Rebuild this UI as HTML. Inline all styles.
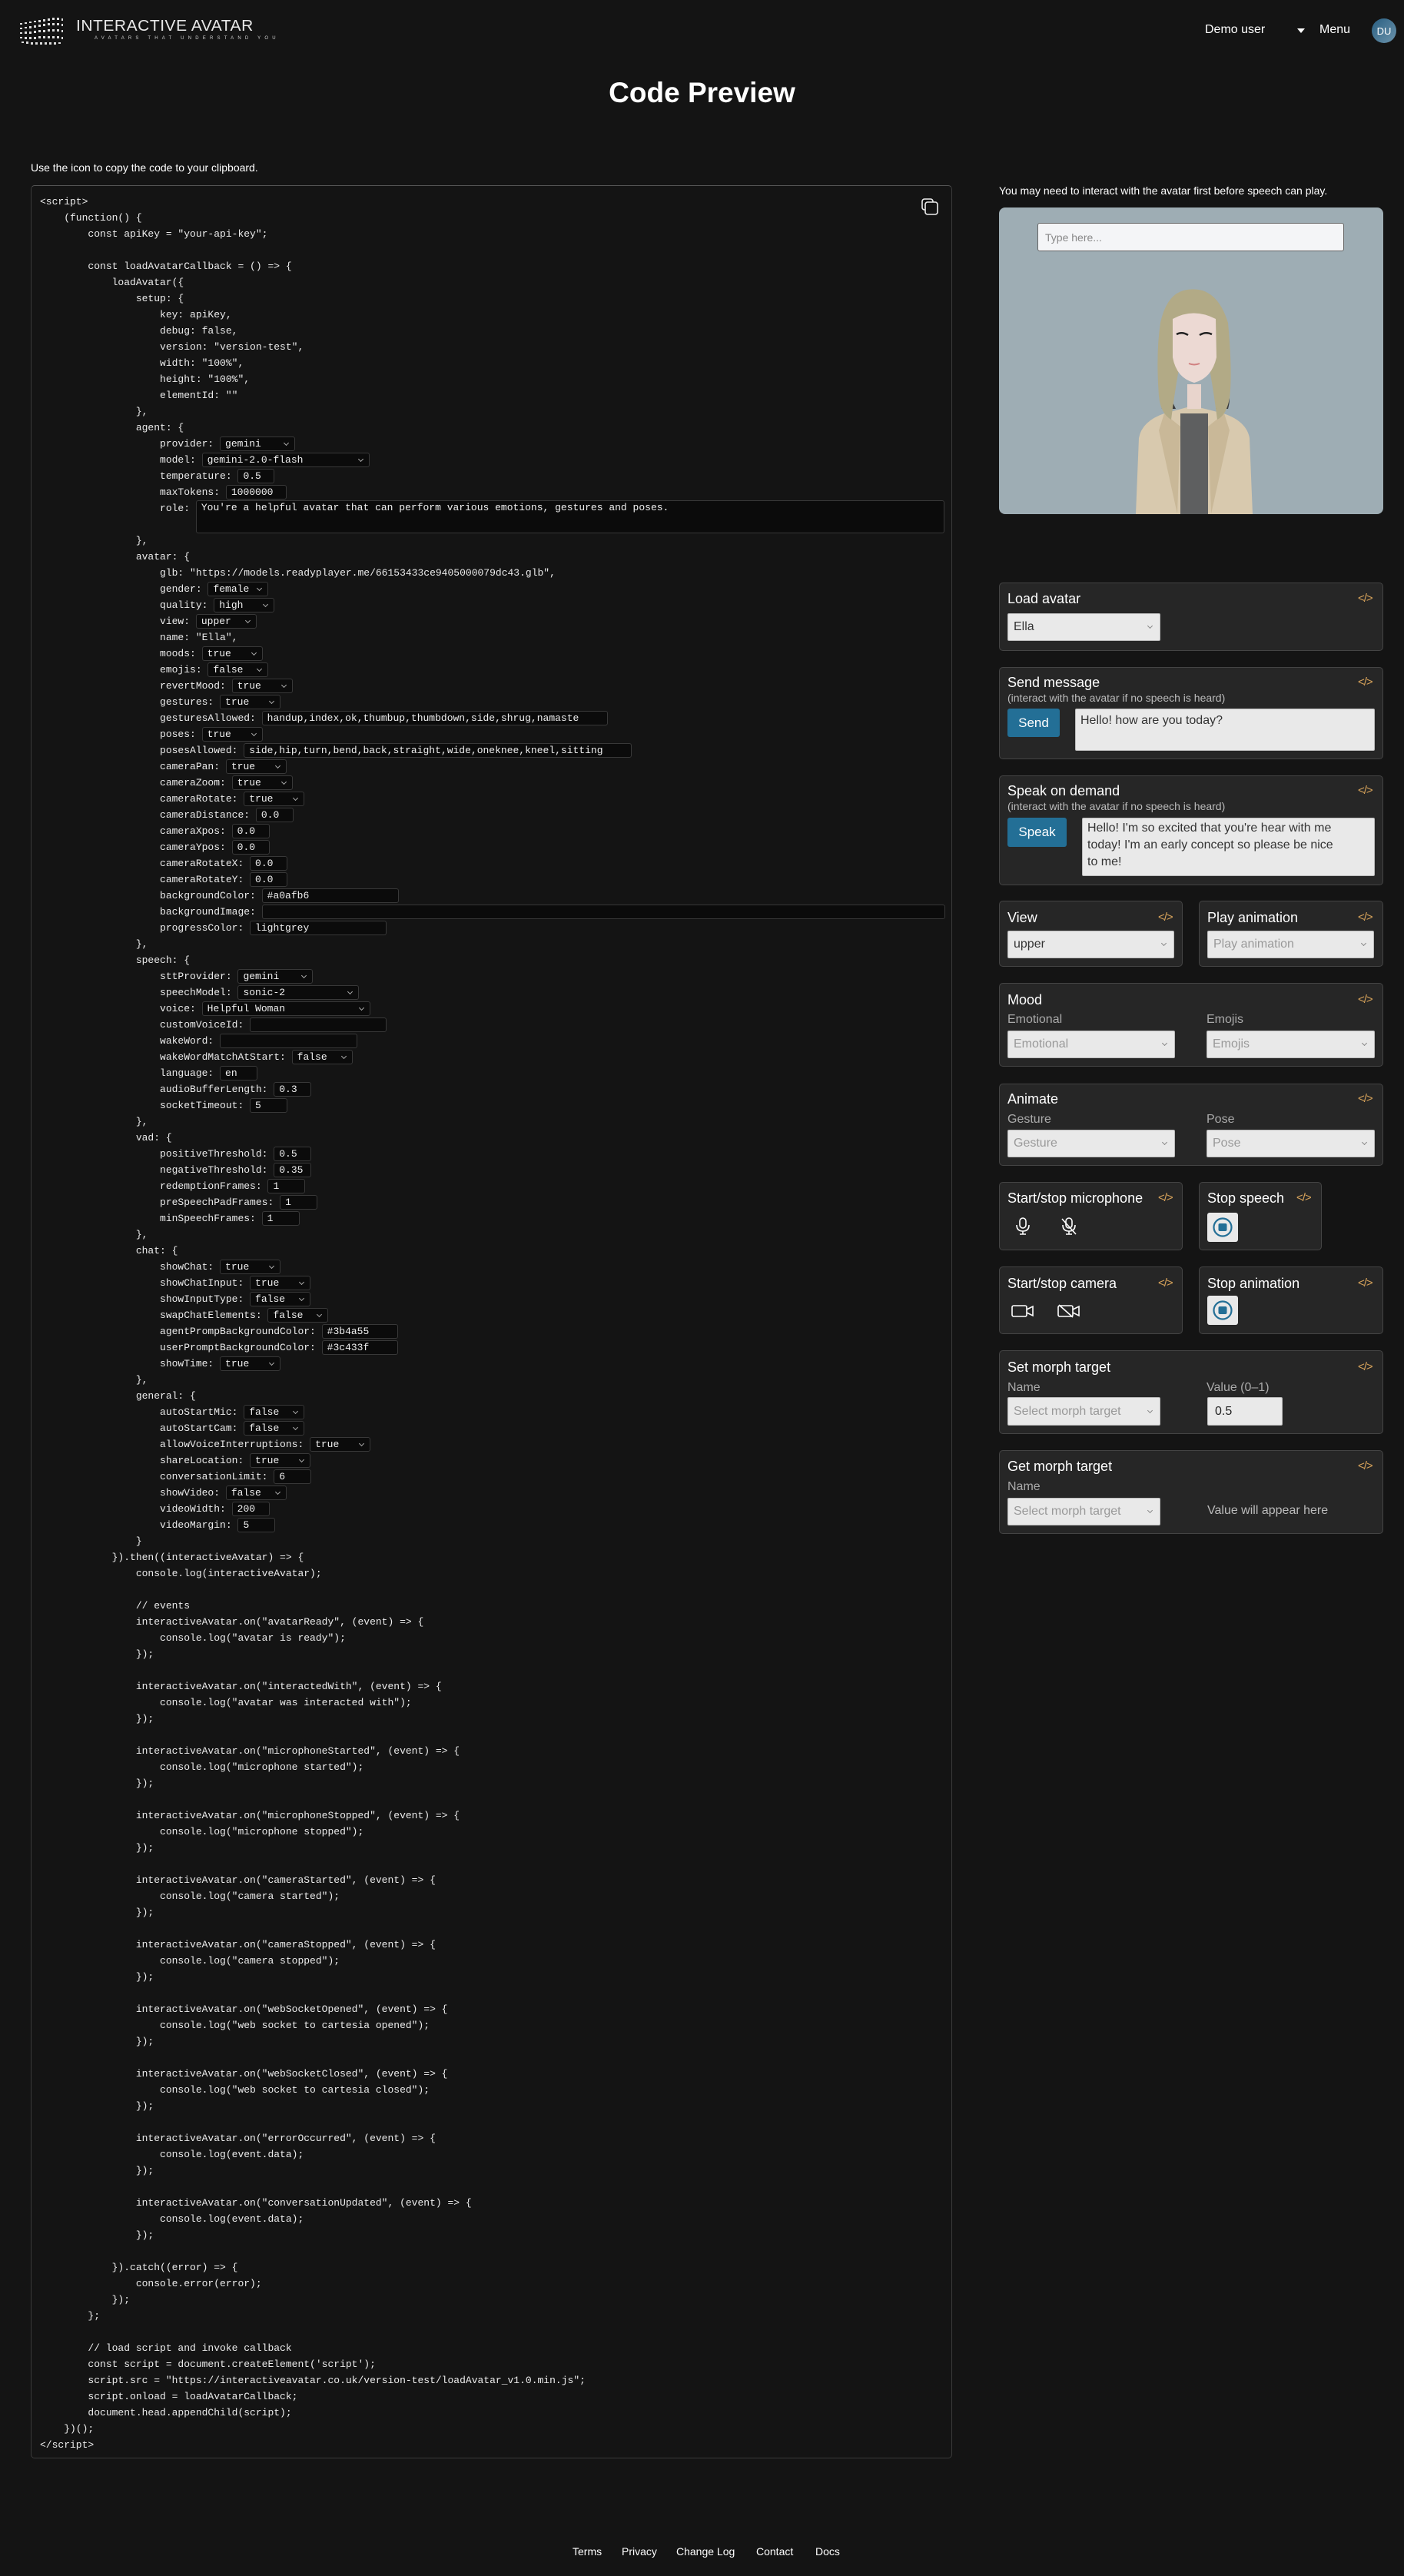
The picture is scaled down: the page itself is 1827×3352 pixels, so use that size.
<!DOCTYPE html>
<html><head><meta charset="utf-8">
<style>
*{box-sizing:border-box;margin:0;padding:0}
body{width:1827px;height:3352px;background:#141414;color:#fff;font-family:"Liberation Sans",sans-serif;position:relative;overflow:hidden}
.abs{position:absolute}
#code{position:absolute;left:40px;top:241px;width:1199px;height:2958px;border:1px solid #3a3a3a;border-top-color:#555;border-radius:5px;background:#141414;padding:10px 0 0 11px;font-family:"Liberation Mono",monospace;font-size:13px;color:#ececec}
#code .l{height:21px;line-height:21px;white-space:pre;display:flex;align-items:center}
.i{display:inline-block;height:19px;line-height:17px;border:1px solid #383838;background:#0b0b0b;border-radius:3px;padding-left:6px;color:#f0f0f0;position:relative;flex:none;white-space:pre}
.s::after{content:"";position:absolute;right:8px;top:5px;width:4px;height:4px;border-right:1px solid #aaa;border-bottom:1px solid #aaa;transform:rotate(45deg)}
.p{position:absolute;background:#262626;border:1px solid #444;border-radius:5px}
.t{position:absolute;font-size:18px;color:#fff;line-height:20px}
.cd{position:absolute;font-size:15px;color:#d9a45b;line-height:16px;letter-spacing:-1px}
.sub{position:absolute;font-size:14px;color:#bbb;line-height:16px}
.lab{position:absolute;font-size:16px;color:#aaa;line-height:18px}
.sel{position:absolute;background:#e9e9e9;border:1px solid #bbb;border-radius:2px;font-size:16px;color:#333;padding-left:7px;display:flex;align-items:center}
.sel::after{content:"";position:absolute;right:10px;top:calc(50% - 4px);width:4px;height:4px;border-right:1px solid #888;border-bottom:1px solid #888;transform:rotate(45deg)}
.sel.noc::after{display:none}
.ph{color:#999}
.btn{position:absolute;background:#236f96;border-radius:3px;color:#fff;font-size:17px;display:flex;align-items:center;justify-content:center}
.ta{position:absolute;background:#e9e9e9;border:1px solid #bbb;border-radius:2px;color:#333;font-size:16px;line-height:21px;padding:4px 6px}
.stop{position:absolute;background:#e9e9e9;border-radius:3px;width:40px;height:38px}
.foot{position:absolute;top:3312px;font-size:14px;color:#fff}
</style></head><body>

<svg class="abs" style="left:24px;top:20px" width="64" height="40" viewBox="0 0 64 40">
<g fill="#ddd">
<rect x="2" y="10" width="3" height="2"/><rect x="8" y="9" width="3" height="2"/><rect x="14" y="8" width="3" height="2"/><rect x="20" y="7" width="3" height="2"/><rect x="26" y="6" width="3" height="3"/><rect x="32" y="5" width="3" height="3"/><rect x="38" y="4" width="3" height="3"/><rect x="44" y="3" width="3" height="3"/><rect x="50" y="3" width="3" height="3"/><rect x="56" y="4" width="2" height="3"/>
<rect x="2" y="16" width="3" height="2"/><rect x="8" y="15" width="3" height="2"/><rect x="14" y="14" width="3" height="3"/><rect x="20" y="13" width="3" height="3"/><rect x="26" y="12" width="3" height="3"/><rect x="32" y="11" width="3" height="3"/><rect x="38" y="10" width="3" height="3"/><rect x="44" y="10" width="3" height="3"/><rect x="50" y="10" width="3" height="3"/><rect x="56" y="11" width="2" height="3"/>
<rect x="2" y="22" width="3" height="2"/><rect x="8" y="21" width="3" height="3"/><rect x="14" y="21" width="3" height="3"/><rect x="20" y="20" width="3" height="3"/><rect x="26" y="19" width="3" height="3"/><rect x="32" y="19" width="3" height="3"/><rect x="38" y="18" width="3" height="3"/><rect x="44" y="18" width="3" height="3"/><rect x="50" y="18" width="3" height="3"/><rect x="56" y="19" width="2" height="3"/>
<rect x="2" y="28" width="3" height="2"/><rect x="8" y="28" width="3" height="3"/><rect x="14" y="28" width="3" height="3"/><rect x="20" y="28" width="3" height="3"/><rect x="26" y="27" width="3" height="3"/><rect x="32" y="27" width="3" height="3"/><rect x="38" y="27" width="3" height="3"/><rect x="44" y="27" width="3" height="3"/><rect x="50" y="27" width="3" height="3"/><rect x="56" y="28" width="2" height="3"/>
<rect x="4" y="34" width="3" height="2"/><rect x="10" y="34" width="3" height="3"/><rect x="16" y="35" width="3" height="3"/><rect x="22" y="35" width="3" height="3"/><rect x="28" y="35" width="3" height="3"/><rect x="34" y="35" width="3" height="3"/><rect x="40" y="35" width="3" height="3"/><rect x="46" y="35" width="3" height="3"/><rect x="52" y="35" width="3" height="2"/>
</g></svg>
<div class="abs" style="left:99px;top:23px;font-size:20px;letter-spacing:0.5px;color:#e8e8e8;transform:scaleX(1.05);transform-origin:left">INTERACTIVE AVATAR</div>
<div class="abs" style="left:123px;top:47px;font-size:6px;letter-spacing:5.2px;color:#ccc">AVATARS THAT UNDERSTAND YOU</div>
<div class="abs" style="left:1568px;top:30px;font-size:16px">Demo user</div>
<div class="abs" style="left:1688px;top:37px;width:0;height:0;border-left:5px solid transparent;border-right:5px solid transparent;border-top:6px solid #fff"></div>
<div class="abs" style="left:1717px;top:30px;font-size:16px">Menu</div>
<div class="abs" style="left:1785px;top:24px;width:32px;height:32px;border-radius:50%;background:linear-gradient(135deg,#2a5f82,#6b93ab);font-size:13px;display:flex;align-items:center;justify-content:center">DU</div>

<div class="abs" style="left:0;width:1827px;top:100px;text-align:center;font-size:37px;font-weight:bold">Code Preview</div>
<div class="abs" style="left:40px;top:210px;font-size:14px">Use the icon to copy the code to your clipboard.</div>

<div id="code">
<svg class="abs" style="left:1158px;top:16px" width="24" height="24" viewBox="0 0 24 24" fill="none" stroke="#eee" stroke-width="1.6"><rect x="1" y="1" width="14" height="14" rx="3"/><rect x="5" y="5" width="16" height="16" rx="3" fill="#141414"/></svg>
<div class="l">&lt;script&gt;</div>
<div class="l">    (function() {</div>
<div class="l">        const apiKey = "your-api-key";</div>
<div class="l"> </div>
<div class="l">        const loadAvatarCallback = () =&gt; {</div>
<div class="l">            loadAvatar({</div>
<div class="l">                setup: {</div>
<div class="l">                    key: apiKey,</div>
<div class="l">                    debug: false,</div>
<div class="l">                    version: "version-test",</div>
<div class="l">                    width: "100%",</div>
<div class="l">                    height: "100%",</div>
<div class="l">                    elementId: ""</div>
<div class="l">                },</div>
<div class="l">                agent: {</div>
<div class="l">                    provider: <span class="i s" style="width:98px">gemini</span></div>
<div class="l">                    model: <span class="i s" style="width:218px">gemini-2.0-flash</span></div>
<div class="l">                    temperature: <span class="i" style="width:48px">0.5</span></div>
<div class="l">                    maxTokens: <span class="i" style="width:79px">1000000</span></div>
<div class="l" style="height:42px;align-items:flex-start">                    role: <span class="i" style="width:974px;height:43px;margin-top:0">You're a helpful avatar that can perform various emotions, gestures and poses.</span></div>
<div class="l">                },</div>
<div class="l">                avatar: {</div>
<div class="l">                    glb: "https://models.readyplayer.me/66153433ce9405000079dc43.glb",</div>
<div class="l">                    gender: <span class="i s" style="width:79px">female</span></div>
<div class="l">                    quality: <span class="i s" style="width:79px">high</span></div>
<div class="l">                    view: <span class="i s" style="width:79px">upper</span></div>
<div class="l">                    name: "Ella",</div>
<div class="l">                    moods: <span class="i s" style="width:79px">true</span></div>
<div class="l">                    emojis: <span class="i s" style="width:79px">false</span></div>
<div class="l">                    revertMood: <span class="i s" style="width:79px">true</span></div>
<div class="l">                    gestures: <span class="i s" style="width:79px">true</span></div>
<div class="l">                    gesturesAllowed: <span class="i" style="width:450px">handup,index,ok,thumbup,thumbdown,side,shrug,namaste</span></div>
<div class="l">                    poses: <span class="i s" style="width:79px">true</span></div>
<div class="l">                    posesAllowed: <span class="i" style="width:505px">side,hip,turn,bend,back,straight,wide,oneknee,kneel,sitting</span></div>
<div class="l">                    cameraPan: <span class="i s" style="width:79px">true</span></div>
<div class="l">                    cameraZoom: <span class="i s" style="width:79px">true</span></div>
<div class="l">                    cameraRotate: <span class="i s" style="width:79px">true</span></div>
<div class="l">                    cameraDistance: <span class="i" style="width:49px">0.0</span></div>
<div class="l">                    cameraXpos: <span class="i" style="width:49px">0.0</span></div>
<div class="l">                    cameraYpos: <span class="i" style="width:49px">0.0</span></div>
<div class="l">                    cameraRotateX: <span class="i" style="width:49px">0.0</span></div>
<div class="l">                    cameraRotateY: <span class="i" style="width:49px">0.0</span></div>
<div class="l">                    backgroundColor: <span class="i" style="width:178px">#a0afb6</span></div>
<div class="l">                    backgroundImage: <span class="i" style="width:889px"></span></div>
<div class="l">                    progressColor: <span class="i" style="width:178px">lightgrey</span></div>
<div class="l">                },</div>
<div class="l">                speech: {</div>
<div class="l">                    sttProvider: <span class="i s" style="width:98px">gemini</span></div>
<div class="l">                    speechModel: <span class="i s" style="width:158px">sonic-2</span></div>
<div class="l">                    voice: <span class="i s" style="width:219px">Helpful Woman</span></div>
<div class="l">                    customVoiceId: <span class="i" style="width:178px"></span></div>
<div class="l">                    wakeWord: <span class="i" style="width:179px"></span></div>
<div class="l">                    wakeWordMatchAtStart: <span class="i s" style="width:79px">false</span></div>
<div class="l">                    language: <span class="i" style="width:49px">en</span></div>
<div class="l">                    audioBufferLength: <span class="i" style="width:49px">0.3</span></div>
<div class="l">                    socketTimeout: <span class="i" style="width:49px">5</span></div>
<div class="l">                },</div>
<div class="l">                vad: {</div>
<div class="l">                    positiveThreshold: <span class="i" style="width:49px">0.5</span></div>
<div class="l">                    negativeThreshold: <span class="i" style="width:49px">0.35</span></div>
<div class="l">                    redemptionFrames: <span class="i" style="width:49px">1</span></div>
<div class="l">                    preSpeechPadFrames: <span class="i" style="width:49px">1</span></div>
<div class="l">                    minSpeechFrames: <span class="i" style="width:49px">1</span></div>
<div class="l">                },</div>
<div class="l">                chat: {</div>
<div class="l">                    showChat: <span class="i s" style="width:79px">true</span></div>
<div class="l">                    showChatInput: <span class="i s" style="width:79px">true</span></div>
<div class="l">                    showInputType: <span class="i s" style="width:79px">false</span></div>
<div class="l">                    swapChatElements: <span class="i s" style="width:79px">false</span></div>
<div class="l">                    agentPrompBackgroundColor: <span class="i" style="width:99px">#3b4a55</span></div>
<div class="l">                    userPromptBackgroundColor: <span class="i" style="width:99px">#3c433f</span></div>
<div class="l">                    showTime: <span class="i s" style="width:79px">true</span></div>
<div class="l">                },</div>
<div class="l">                general: {</div>
<div class="l">                    autoStartMic: <span class="i s" style="width:79px">false</span></div>
<div class="l">                    autoStartCam: <span class="i s" style="width:79px">false</span></div>
<div class="l">                    allowVoiceInterruptions: <span class="i s" style="width:79px">true</span></div>
<div class="l">                    shareLocation: <span class="i s" style="width:79px">true</span></div>
<div class="l">                    conversationLimit: <span class="i" style="width:49px">6</span></div>
<div class="l">                    showVideo: <span class="i s" style="width:79px">false</span></div>
<div class="l">                    videoWidth: <span class="i" style="width:49px">200</span></div>
<div class="l">                    videoMargin: <span class="i" style="width:49px">5</span></div>
<div class="l">                }</div>
<div class="l">            }).then((interactiveAvatar) =&gt; {</div>
<div class="l">                console.log(interactiveAvatar);</div>
<div class="l"> </div>
<div class="l">                // events</div>
<div class="l">                interactiveAvatar.on("avatarReady", (event) =&gt; {</div>
<div class="l">                    console.log("avatar is ready");</div>
<div class="l">                });</div>
<div class="l"> </div>
<div class="l">                interactiveAvatar.on("interactedWith", (event) =&gt; {</div>
<div class="l">                    console.log("avatar was interacted with");</div>
<div class="l">                });</div>
<div class="l"> </div>
<div class="l">                interactiveAvatar.on("microphoneStarted", (event) =&gt; {</div>
<div class="l">                    console.log("microphone started");</div>
<div class="l">                });</div>
<div class="l"> </div>
<div class="l">                interactiveAvatar.on("microphoneStopped", (event) =&gt; {</div>
<div class="l">                    console.log("microphone stopped");</div>
<div class="l">                });</div>
<div class="l"> </div>
<div class="l">                interactiveAvatar.on("cameraStarted", (event) =&gt; {</div>
<div class="l">                    console.log("camera started");</div>
<div class="l">                });</div>
<div class="l"> </div>
<div class="l">                interactiveAvatar.on("cameraStopped", (event) =&gt; {</div>
<div class="l">                    console.log("camera stopped");</div>
<div class="l">                });</div>
<div class="l"> </div>
<div class="l">                interactiveAvatar.on("webSocketOpened", (event) =&gt; {</div>
<div class="l">                    console.log("web socket to cartesia opened");</div>
<div class="l">                });</div>
<div class="l"> </div>
<div class="l">                interactiveAvatar.on("webSocketClosed", (event) =&gt; {</div>
<div class="l">                    console.log("web socket to cartesia closed");</div>
<div class="l">                });</div>
<div class="l"> </div>
<div class="l">                interactiveAvatar.on("errorOccurred", (event) =&gt; {</div>
<div class="l">                    console.log(event.data);</div>
<div class="l">                });</div>
<div class="l"> </div>
<div class="l">                interactiveAvatar.on("conversationUpdated", (event) =&gt; {</div>
<div class="l">                    console.log(event.data);</div>
<div class="l">                });</div>
<div class="l"> </div>
<div class="l">            }).catch((error) =&gt; {</div>
<div class="l">                console.error(error);</div>
<div class="l">            });</div>
<div class="l">        };</div>
<div class="l"> </div>
<div class="l">        // load script and invoke callback</div>
<div class="l">        const script = document.createElement('script');</div>
<div class="l">        script.src = "https://interactiveavatar.co.uk/version-test/loadAvatar_v1.0.min.js";</div>
<div class="l">        script.onload = loadAvatarCallback;</div>
<div class="l">        document.head.appendChild(script);</div>
<div class="l">    })();</div>
<div class="l">&lt;/script&gt;</div>
</div>

<div class="abs" style="left:1300px;top:240px;font-size:14px">You may need to interact with the avatar first before speech can play.</div>
<div class="abs" style="left:1300px;top:270px;width:500px;height:399px;background:#9eadb4;border-radius:8px;overflow:hidden">
  <div class="abs" style="left:50px;top:20px;width:399px;height:37px;background:#f4f5f7;border:1px solid #666;border-radius:3px;font-size:14px;color:#888;padding:10px 9px">Type here...</div>
  <svg class="abs" style="left:0;top:0" width="500" height="399" viewBox="0 0 500 399">
    <path d="M178 399 L182 300 Q186 278 215 268 L252 258 L292 268 Q322 278 326 300 L330 399 Z" fill="#d8c9ae"/>
    <path d="M236 268 L272 268 L272 399 L236 399 Z" fill="#5e5f60"/>
    <path d="M212 262 Q205 240 214 228 L230 262 Z M292 228 Q304 240 298 262 L282 262 Z" fill="#3a3b3c"/>
    <path d="M236 285 L215 268 L208 290 L232 399 Z M272 285 L293 268 L300 290 L276 399 Z" fill="#c9b898"/>
    <path d="M240 108 Q282 98 298 150 Q304 215 300 248 Q296 270 284 276 Q278 230 272 200 L236 200 Q230 230 224 276 Q210 268 208 245 Q204 190 210 150 Q218 114 240 108 Z" fill="#b2aa86"/>
    <path d="M226 145 Q253 130 282 145 L283 195 Q277 222 254 228 Q231 222 226 195 Z" fill="#ecd9d3"/>
    <path d="M245 230 L263 230 L263 262 L245 262 Z" fill="#e8d4cc"/>
    <path d="M231 165 Q238 161 246 166 M261 166 Q269 161 277 165" stroke="#222" stroke-width="2.5" fill="none"/>
    <path d="M247 203 Q254 206 261 203" stroke="#d08080" stroke-width="2" fill="none"/>
  </svg>
</div>

<div class="p" style="left:1300px;top:758px;width:500px;height:89px"></div>
<div class="t" style="left:1311px;top:769px">Load avatar</div><div class="cd" style="left:1767px;top:771px">&lt;/&gt;</div>
<div class="sel" style="left:1311px;top:798px;width:199px;height:36px">Ella</div>

<div class="p" style="left:1300px;top:868px;width:500px;height:120px"></div>
<div class="t" style="left:1311px;top:878px">Send message</div><div class="cd" style="left:1767px;top:880px">&lt;/&gt;</div>
<div class="sub" style="left:1311px;top:900px">(interact with the avatar if no speech is heard)</div>
<div class="btn" style="left:1311px;top:922px;width:68px;height:37px">Send</div>
<div class="ta" style="left:1399px;top:922px;width:390px;height:55px">Hello! how are you today?</div>

<div class="p" style="left:1300px;top:1009px;width:500px;height:143px"></div>
<div class="t" style="left:1311px;top:1019px">Speak on demand</div><div class="cd" style="left:1767px;top:1021px">&lt;/&gt;</div>
<div class="sub" style="left:1311px;top:1041px">(interact with the avatar if no speech is heard)</div>
<div class="btn" style="left:1311px;top:1064px;width:77px;height:38px">Speak</div>
<div class="ta" style="left:1408px;top:1064px;width:381px;height:76px;line-height:22px;padding-top:2px">Hello! I'm so excited that you're hear with me<br>today! I'm an early concept so please be nice<br>to me!</div>

<div class="p" style="left:1300px;top:1172px;width:239px;height:86px"></div>
<div class="t" style="left:1311px;top:1184px">View</div><div class="cd" style="left:1507px;top:1186px">&lt;/&gt;</div>
<div class="sel" style="left:1311px;top:1211px;width:217px;height:36px">upper</div>
<div class="p" style="left:1560px;top:1172px;width:240px;height:86px"></div>
<div class="t" style="left:1571px;top:1184px">Play animation</div><div class="cd" style="left:1767px;top:1186px">&lt;/&gt;</div>
<div class="sel ph" style="left:1571px;top:1211px;width:217px;height:36px">Play animation</div>

<div class="p" style="left:1300px;top:1279px;width:500px;height:109px"></div>
<div class="t" style="left:1311px;top:1291px">Mood</div><div class="cd" style="left:1767px;top:1293px">&lt;/&gt;</div>
<div class="lab" style="left:1311px;top:1318px">Emotional</div><div class="lab" style="left:1570px;top:1318px">Emojis</div>
<div class="sel ph" style="left:1311px;top:1341px;width:218px;height:36px">Emotional</div>
<div class="sel ph" style="left:1570px;top:1341px;width:219px;height:36px">Emojis</div>

<div class="p" style="left:1300px;top:1410px;width:500px;height:107px"></div>
<div class="t" style="left:1311px;top:1420px">Animate</div><div class="cd" style="left:1767px;top:1422px">&lt;/&gt;</div>
<div class="lab" style="left:1311px;top:1448px">Gesture</div><div class="lab" style="left:1570px;top:1448px">Pose</div>
<div class="sel ph" style="left:1311px;top:1470px;width:218px;height:36px">Gesture</div>
<div class="sel ph" style="left:1570px;top:1470px;width:219px;height:36px">Pose</div>

<div class="p" style="left:1300px;top:1538px;width:239px;height:89px"></div>
<div class="t" style="left:1311px;top:1549px">Start/stop microphone</div><div class="cd" style="left:1507px;top:1551px">&lt;/&gt;</div>
<svg class="abs" style="left:1320px;top:1584px" width="22" height="24" viewBox="0 0 22 24" fill="none" stroke="#fff" stroke-width="1.6"><rect x="7" y="1" width="8" height="13" rx="4"/><path d="M3 10 Q3 18 11 18 Q19 18 19 10 M11 18 V22 M7 22 H15"/></svg>
<svg class="abs" style="left:1380px;top:1584px" width="22" height="24" viewBox="0 0 22 24" fill="none" stroke="#fff" stroke-width="1.6"><rect x="7" y="1" width="8" height="13" rx="4"/><path d="M3 10 Q3 18 11 18 Q19 18 19 10 M11 18 V22 M7 22 H15 M2 2 L20 22"/></svg>
<div class="p" style="left:1560px;top:1538px;width:160px;height:89px"></div>
<div class="t" style="left:1571px;top:1549px">Stop speech</div><div class="cd" style="left:1687px;top:1551px">&lt;/&gt;</div>
<div class="stop" style="left:1571px;top:1578px"><svg width="40" height="38" viewBox="0 0 40 38"><circle cx="20" cy="19" r="11.5" fill="none" stroke="#236f96" stroke-width="2.2"/><rect x="14.5" y="14" width="11" height="10" rx="2" fill="#236f96"/></svg></div>

<div class="p" style="left:1300px;top:1648px;width:239px;height:88px"></div>
<div class="t" style="left:1311px;top:1660px">Start/stop camera</div><div class="cd" style="left:1507px;top:1662px">&lt;/&gt;</div>
<svg class="abs" style="left:1316px;top:1697px" width="30" height="18" viewBox="0 0 30 18" fill="none" stroke="#fff" stroke-width="1.6"><rect x="1" y="2" width="19" height="14" rx="2"/><path d="M20 7 L28 3 V15 L20 11"/></svg>
<svg class="abs" style="left:1376px;top:1697px" width="30" height="18" viewBox="0 0 30 18" fill="none" stroke="#fff" stroke-width="1.6"><rect x="1" y="2" width="19" height="14" rx="2"/><path d="M20 7 L28 3 V15 L20 11 M2 1 L20 17"/></svg>
<div class="p" style="left:1560px;top:1648px;width:240px;height:88px"></div>
<div class="t" style="left:1571px;top:1660px">Stop animation</div><div class="cd" style="left:1767px;top:1662px">&lt;/&gt;</div>
<div class="stop" style="left:1571px;top:1686px"><svg width="40" height="38" viewBox="0 0 40 38"><circle cx="20" cy="19" r="11.5" fill="none" stroke="#236f96" stroke-width="2.2"/><rect x="14.5" y="14" width="11" height="10" rx="2" fill="#236f96"/></svg></div>

<div class="p" style="left:1300px;top:1757px;width:500px;height:109px"></div>
<div class="t" style="left:1311px;top:1769px">Set morph target</div><div class="cd" style="left:1767px;top:1771px">&lt;/&gt;</div>
<div class="lab" style="left:1311px;top:1797px">Name</div><div class="lab" style="left:1570px;top:1797px">Value (0–1)</div>
<div class="sel ph" style="left:1311px;top:1818px;width:199px;height:37px">Select morph target</div>
<div class="sel noc" style="left:1571px;top:1818px;width:98px;height:37px;color:#222;padding-left:9px">0.5</div>

<div class="p" style="left:1300px;top:1887px;width:500px;height:109px"></div>
<div class="t" style="left:1311px;top:1898px">Get morph target</div><div class="cd" style="left:1767px;top:1900px">&lt;/&gt;</div>
<div class="lab" style="left:1311px;top:1926px">Name</div>
<div class="sel ph" style="left:1311px;top:1949px;width:199px;height:36px">Select morph target</div>
<div class="lab" style="left:1571px;top:1957px;color:#bbb">Value will appear here</div>

<div class="foot" style="left:745px">Terms</div>
<div class="foot" style="left:809px">Privacy</div>
<div class="foot" style="left:880px">Change Log</div>
<div class="foot" style="left:984px">Contact</div>
<div class="foot" style="left:1061px">Docs</div>
</body></html>
